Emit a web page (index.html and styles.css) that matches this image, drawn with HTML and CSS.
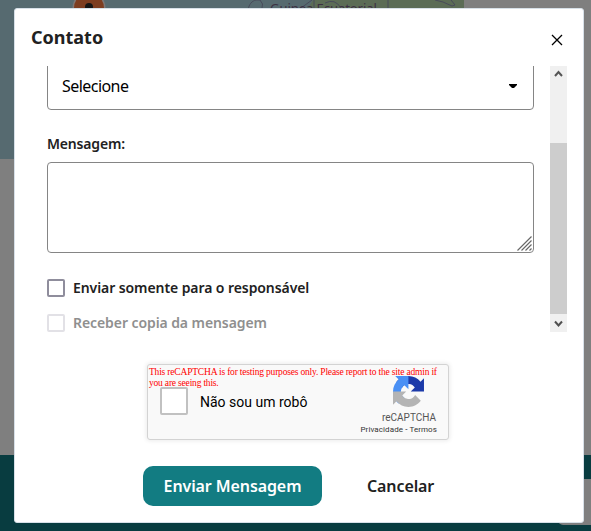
FILE: index.html
```html
<!DOCTYPE html>
<html lang="pt-BR">
<head>
<meta charset="utf-8">
<title>Contato</title>
<link rel="stylesheet" href="styles.css">
</head>
<body>
<div class="page">
  <div class="map">
    <svg class="map-art" width="464" height="159" viewBox="0 0 464 159">
      <path d="M307 10L313 0H464V159H307Z" fill="#5b6c56"/>
      <path d="M248 10C249 4 252 1 256 0H260Q264 4 262 8M301 8L312 0M314 0V8M325 3Q335 -2 341 8M435 0L443 2 452 6 455 5 451 0M388 0V8" fill="none" stroke="#484b5b"/>
      <circle cx="89" cy="8" r="16.500" fill="#7f7776"/>
      <circle cx="89" cy="8" r="15" fill="#7d3d20"/>
      <circle cx="89" cy="7" r="4" fill="#151515"/>
    </svg>
    <span class="map-label">Guinea Ecuatorial</span>
  </div>
  <div class="gap"></div>
  <div class="footer"><div class="widget"></div></div>
</div>

<div class="modal" role="dialog" aria-label="Contato">
  <header class="head">
    <h1>Contato</h1>
    <svg class="close" width="12" height="12" viewBox="0 0 12 12"><path d="M1 1L11 11M11 1L1 11" stroke="#000" stroke-width="1.300"/></svg>
  </header>
  <div class="body">
    <div class="form">
      <div class="select"><span>Selecione</span><svg width="8" height="5" viewBox="0 0 8 5"><path d="M0 0H8V1L5 4H3L0 1Z"/></svg></div>
      <div class="label">Mensagem:</div>
      <div class="textarea"><svg width="15" height="15" viewBox="0 0 15 15"><path d="M.5 14.500L14.500 .5M4.500 14.500L14.500 4.500M8.500 14.500L14.500 8.500M12.500 14.500L14.500 12.500" stroke="#686868" stroke-width="1.200"/></svg></div>
      <div class="check"><i></i><span>Enviar somente para o responsável</span></div>
      <div class="check off"><i></i><span>Receber copia da mensagem</span></div>
    </div>
    <div class="scrollbar">
      <svg width="17" height="17" viewBox="0 0 17 17"><path d="M5 10L8.500 6 12 10" fill="none" stroke="#555" stroke-width="2"/></svg>
      <div class="thumb"></div>
      <svg width="17" height="17" viewBox="0 0 17 17"><path d="M5 7.500L8.500 11.500 12 7.500" fill="none" stroke="#505050" stroke-width="2"/></svg>
    </div>
  </div>
  <div class="captcha">
    <div class="warning">This reCAPTCHA is for testing purposes only. Please report to the site admin if<br>you are seeing this.</div>
    <div class="box"></div>
    <div class="robot">Não sou um robô</div>
    <div class="brand">
      <svg width="31" height="31" viewBox="0 0 64 64">
        <path d="M64 31.955l-.033-1.370V4.687l-7.160 7.160C50.948 4.674 42.033.093 32.050.093c-10.400 0-19.622 4.960-25.458 12.640l11.736 11.860a15.550 15.550 0 0 1 4.754-5.334c2.050-1.600 4.952-2.906 8.968-2.906.485 0 .86.057 1.135.163 4.976.393 9.288 3.140 11.828 7.124l-8.307 8.307L64 31.953" fill="#1c3aa9"/>
        <path d="M31.862.094l-1.370.033H4.594l7.160 7.160C4.580 13.147 0 22.060 0 32.046c0 10.400 4.960 19.622 12.640 25.458L24.500 45.768a15.550 15.550 0 0 1-5.334-4.754c-1.600-2.050-2.906-4.952-2.906-8.968 0-.485.057-.86.163-1.135.393-4.976 3.140-9.288 7.124-11.828l8.307 8.307L31.860.095" fill="#4a90f5"/>
        <path d="M.001 32.045l.033 1.370v25.898l7.160-7.160c5.860 7.173 14.774 11.754 24.760 11.754 10.400 0 19.622-4.960 25.458-12.640l-11.736-11.860a15.550 15.550 0 0 1-4.754 5.334c-2.050 1.600-4.952 2.906-8.968 2.906-.485 0-.86-.057-1.135-.163-4.976-.393-9.288-3.140-11.828-7.124l8.307-8.307c-10.522.040-22.400.066-27.295-.005" fill="#b4b4b4"/>
      </svg>
      <div class="name">reCAPTCHA</div>
      <div class="links">Privacidade <b>-</b> Termos</div>
    </div>
  </div>
  <div class="actions">
    <div class="btn primary">Enviar Mensagem</div>
    <div class="btn">Cancelar</div>
  </div>
</div>
</body>
</html>
```
FILE: styles.css
```css
* { box-sizing: border-box; }
body { margin: 0; width: 591px; height: 531px; overflow: hidden; position: relative; font-family: "Noto Sans", sans-serif; color: #212121; }
svg { display: block; flex: none; }
.page { height: 531px; background: #7f7f7f; display: flex; flex-direction: column; }
.map { height: 159px; width: 464px; background: #566a70; position: relative; }
.map-label { position: absolute; left: 270px; top: -1px; font-size: 13px; line-height: 18px; letter-spacing: -.05px; color: #3b3043; white-space: nowrap; }
.gap { height: 296px; }
.footer { height: 76px; background: #083c40; padding-top: 24px; display: flex; justify-content: flex-end; }
.widget { width: 33px; height: 46px; background: #7f7f7f; border-radius: 0 0 0 5px; }

.modal { position: absolute; left: 14px; top: 8px; width: 570px; height: 515px; background: #fff; border: 1px solid #d7e0e8; border-radius: 3px; display: flex; flex-direction: column; }
.head { height: 57px; flex: none; display: flex; justify-content: space-between; padding: 16px 20px 0 16px; }
h1 { margin: 0; font-size: 18px; line-height: 25px; font-weight: 700; }
.close { margin-top: 9px; }
.body { height: 266px; flex: none; display: flex; justify-content: space-between; overflow: hidden; padding: 0 16px 0 32px; }
.form { width: 487px; }
.select { height: 60px; margin-top: -16px; border: 1px solid #858585; border-radius: 4px; display: flex; align-items: center; justify-content: space-between; padding: 13px 16px 0 14px; font-size: 16px; color: #000; }
.select span { letter-spacing: -.55px; padding-bottom: 2px; }
.label { margin-top: 24px; height: 28px; font-size: 14px; line-height: 20px; font-weight: 600; letter-spacing: -.18px; }
.textarea { height: 91px; border: 1px solid #858585; border-radius: 4px; display: flex; align-items: flex-end; justify-content: flex-end; padding: 1px; }
.check { display: flex; align-items: center; height: 18px; margin-top: 26px; font-size: 14px; line-height: 18px; font-weight: 600; letter-spacing: -.08px; }
.check i { width: 18px; height: 18px; border: 2px solid #8f8d9c; border-radius: 2px; margin-right: 8px; }
.check.off { margin-top: 17px; color: #8f8f8f; }
.check.off i { border-color: #e2e1e6; }
.scrollbar { width: 17px; background: #f0f0f0; display: flex; flex-direction: column; }
.thumb { height: 171px; margin-top: 60px; background: #cdcdcd; }

.captcha { width: 302px; height: 76px; flex: none; margin: 32px 0 0 132px; background: #f9f9f9; border: 1px solid #d3d3d3; border-radius: 3px; box-shadow: 0 0 4px 1px rgba(0,0,0,.08); display: grid; grid-template-columns: 12px 28px 12px 1fr 80px; grid-template-rows: 22px 28px 24px; font-family: Roboto, sans-serif; }
.warning { grid-column: 1 / -1; grid-row: 1; z-index: 1; padding: 2px 0 0 1px; font: 9.5px/11px "Liberation Serif", serif; letter-spacing: -.19px; color: red; white-space: nowrap; }
.box { grid-column: 2; grid-row: 2; border: 2px solid #c1c1c1; border-radius: 2px; background: #fff; }
.robot { grid-column: 4; grid-row: 2; font-size: 14px; line-height: 30px; color: #000; }
.brand { grid-column: 5; grid-row: 1 / 4; padding-top: 11px; display: flex; flex-direction: column; align-items: center; color: #555; white-space: nowrap; }
.brand svg { margin-left: 1px; }
.name { font-size: 10px; line-height: 12px; margin: 5px 0 0 2px; }
.links { font-size: 8px; line-height: 10px; margin-top: 1px; align-self: flex-end; padding-right: 11px; letter-spacing: .09px; color: #333; }
.links b { color: #000; font-weight: 400; }
.actions { margin: 26px 0 0 128px; display: flex; gap: 25px; }
.btn { height: 40px; padding: 0 20px; font-size: 16px; line-height: 40px; font-weight: 600; letter-spacing: -.1px; }
.primary { width: 179px; padding: 0; text-align: center; background: #127c82; color: #fff; border-radius: 10px; }
```
